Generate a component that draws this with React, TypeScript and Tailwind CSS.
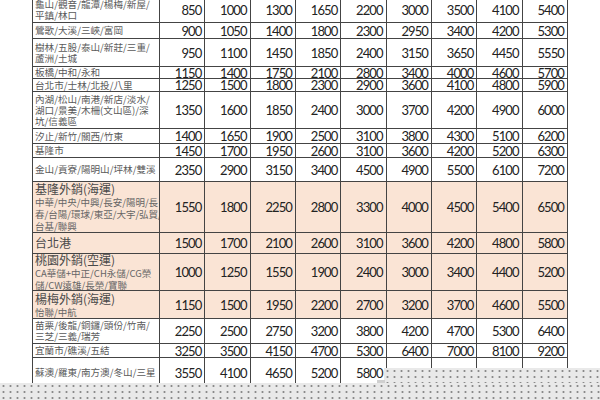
import React from 'react';

type Row = {
    h: string;
    lines?: string[];
    title?: string;
    sub?: string[];
    nums: number[];
    peach?: boolean;
};

const rows: Row[] = [
    { h: 'h-[25px]', lines: ['龜山/觀音/龍潭/楊梅/新屋/', '平鎮/林口'], nums: [850, 1000, 1300, 1650, 2200, 3000, 3500, 4100, 5400] },
    { h: 'h-[16px]', lines: ['鶯歌/大溪/三峽/富岡'], nums: [900, 1050, 1400, 1800, 2300, 2950, 3400, 4200, 5300] },
    { h: 'h-[28px]', lines: ['樹林/五股/泰山/新莊/三重/', '蘆洲/土城'], nums: [950, 1100, 1450, 1850, 2400, 3150, 3650, 4450, 5550] },
    { h: 'h-[12px]', lines: ['板橋/中和/永和'], nums: [1150, 1400, 1750, 2100, 2800, 3400, 4000, 4600, 5700] },
    { h: 'h-[13px]', lines: ['台北市/士林/北投/八里'], nums: [1250, 1500, 1800, 2300, 2900, 3600, 4100, 4800, 5900] },
    { h: 'h-[37px]', lines: ['內湖/松山/南港/新店/淡水/', '湖口/景美/木柵(文山區)/深', '坑/信義區'], nums: [1350, 1600, 1850, 2400, 3000, 3700, 4200, 4900, 6000] },
    { h: 'h-[15px]', lines: ['汐止/新竹/關西/竹東'], nums: [1400, 1650, 1900, 2500, 3100, 3800, 4300, 5100, 6200] },
    { h: 'h-[14px]', lines: ['基隆市'], nums: [1450, 1700, 1950, 2600, 3100, 3600, 4200, 5200, 6300] },
    { h: 'h-[24px]', lines: ['金山/貢寮/陽明山/坪林/雙溪'], nums: [2350, 2900, 3150, 3400, 4500, 4900, 5500, 6100, 7200] },
    { h: 'h-[51px]', title: '基隆外銷(海運)', sub: ['中華/中央/中興/長安/陽明/長', '春/台陽/環球/東亞/大宇/弘貿/', '台基/聯興'], peach: true, nums: [1550, 1800, 2250, 2800, 3300, 4000, 4500, 5400, 6500] },
    { h: 'h-[21px]', title: '台北港', peach: true, nums: [1500, 1700, 2100, 2600, 3100, 3600, 4200, 4800, 5800] },
    { h: 'h-[37px]', title: '桃園外銷(空運)', sub: ['CA華儲+中正/CH永儲/CG榮', '儲/CW遠雄/長榮/寶聯'], peach: true, nums: [1000, 1250, 1550, 1900, 2400, 3000, 3400, 4400, 5200] },
    { h: 'h-[28px]', title: '楊梅外銷(海運)', sub: ['怡聯/中航'], peach: true, nums: [1150, 1500, 1950, 2200, 2700, 3200, 3700, 4600, 5500] },
    { h: 'h-[25px]', lines: ['苗栗/後龍/銅鑼/頭份/竹南/', '三芝/三義/瑞芳'], nums: [2250, 2500, 2750, 3200, 3800, 4200, 4700, 5300, 6400] },
    { h: 'h-[14px]', lines: ['宜蘭市/礁溪/五結'], nums: [3250, 3500, 4150, 4700, 5300, 6400, 7000, 8100, 9200] },
    { h: 'h-[30px]', lines: ['蘇澳/羅東/南方澳/冬山/三星'], nums: [3550, 4100, 4650, 5200, 5800, 6900, 7500, 8600, 9700] },
];

const cjk = { fontFamily: '"Noto Sans CJK TC", "Noto Sans", sans-serif' };
const num = { fontFamily: 'Lato, "Liberation Sans", sans-serif' };

const App = () => {
    return (
        <div className="relative w-[600px] h-[400px] overflow-hidden bg-white">
            <div className="ml-[32px] mt-[-3px] w-[536px] border-l border-t border-[#444]">
                {rows.map((row, i) => (
                    <div
                        key={i}
                        className={`grid grid-cols-[127px_repeat(9,minmax(0,1fr))] ${row.h} ${row.peach ? 'bg-[#fae4d5]' : 'bg-white'}`}
                    >
                        <div className="flex flex-col justify-center overflow-hidden border-r border-b border-[#444] pl-[2px]" style={cjk}>
                            {row.title && (
                                <div className="text-[12px] leading-[14px] text-[#4a4a4a] whitespace-nowrap">{row.title}</div>
                            )}
                            {row.sub && row.sub.map((l) => (
                                <div key={l} className="text-[9.5px] leading-[12px] text-[#666] whitespace-nowrap">{l}</div>
                            ))}
                            {row.lines && row.lines.map((l) => (
                                <div key={l} className="text-[9.6px] leading-[11px] text-[#5a5a5a] whitespace-nowrap">{l}</div>
                            ))}
                        </div>
                        {row.nums.map((n, j) => (
                            <div
                                key={j}
                                className="flex items-center justify-end overflow-hidden border-r border-b border-[#444] pr-[3px] text-[13px] leading-[10px] tracking-[-0.9px] text-[#222]"
                                style={num}
                            >
                                {n}
                            </div>
                        ))}
                    </div>
                ))}
            </div>
            <div className="absolute left-[384px] top-[368px] right-0 bottom-0 bg-[#e9e9e9] bg-[radial-gradient(circle,#8a8a8a_0.8px,transparent_1.3px)] bg-[length:7px_6px]" />
            <div className="absolute left-[377px] top-[380px] w-[8px] h-[3px] bg-[#cfcfcf]" />
            <div className="absolute left-0 top-[383px] right-0 bottom-0 bg-[#e9e9e9] bg-[radial-gradient(circle,#8a8a8a_0.8px,transparent_1.3px)] bg-[length:7px_6px]" />
        </div>
    );
};

export default App;
